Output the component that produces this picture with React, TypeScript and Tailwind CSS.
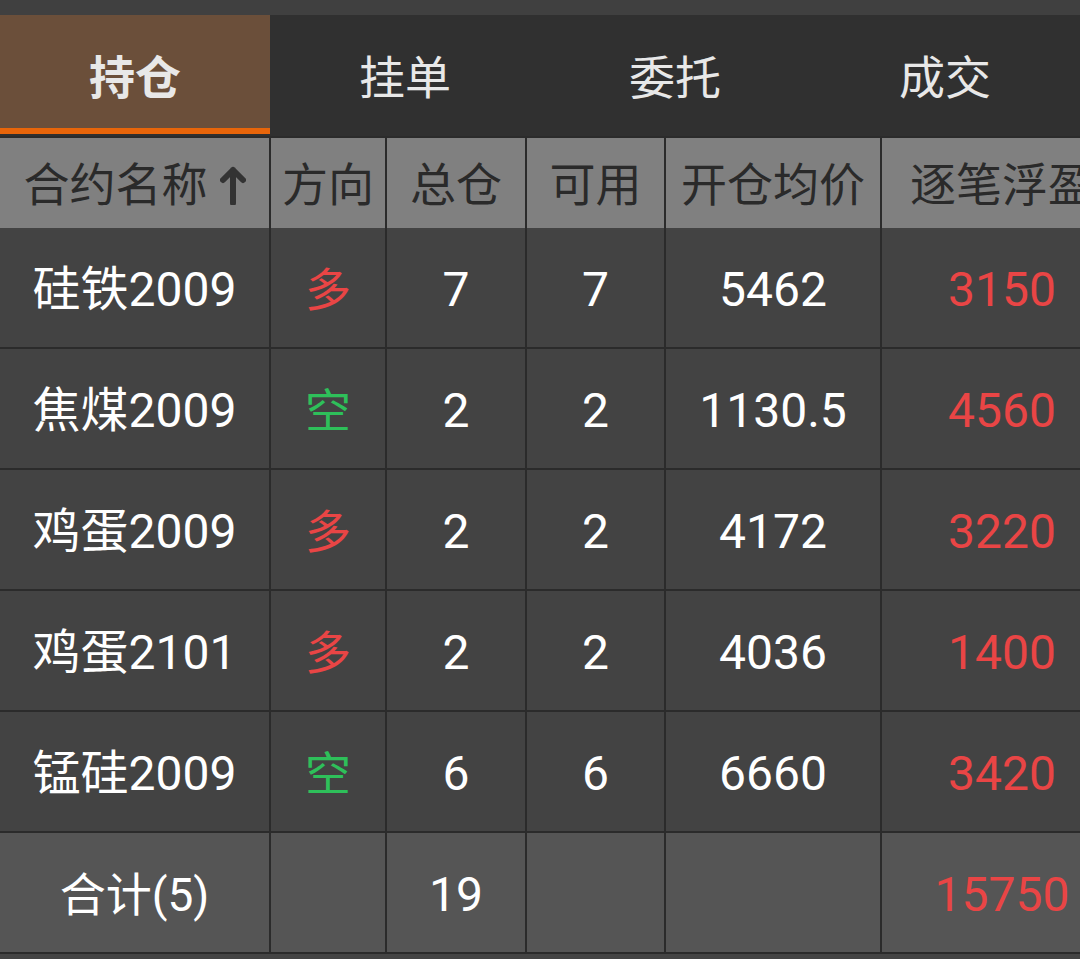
import React from "react";

const font = {
  fontFamily: 'Roboto, "Noto Sans CJK SC", "Noto Sans", sans-serif',
};

const tabs = ["持仓", "挂单", "委托", "成交"];

interface Position {
  name: string;
  side: "多" | "空";
  total: number;
  avail: number;
  price: string;
  pnl: string;
}

const rows: Position[] = [
  { name: "硅铁2009", side: "多", total: 7, avail: 7, price: "5462", pnl: "3150" },
  { name: "焦煤2009", side: "空", total: 2, avail: 2, price: "1130.5", pnl: "4560" },
  { name: "鸡蛋2009", side: "多", total: 2, avail: 2, price: "4172", pnl: "3220" },
  { name: "鸡蛋2101", side: "多", total: 2, avail: 2, price: "4036", pnl: "1400" },
  { name: "锰硅2009", side: "空", total: 6, avail: 6, price: "6660", pnl: "3420" },
];

const cols = "grid grid-cols-[271px_116px_140px_139px_216px_242px] w-[1124px]";
const cell = "flex items-center justify-center border-r-2 border-[#2b2b2b]";

function SortArrow() {
  return (
    <svg width="26" height="40" viewBox="0 0 26 40" className="ml-3 shrink-0">
      <path
        d="M13 38 V5 M3 15 L13 5 L23 15"
        fill="none"
        stroke="#333333"
        strokeWidth={6}
        strokeLinecap="round"
        strokeLinejoin="round"
      />
    </svg>
  );
}

export default function App() {
  return (
    <div className="w-[1080px] h-[959px] overflow-hidden bg-[#444444]" style={font}>
      <div className="h-[15px] bg-[#404040]" />

      <div className="flex h-[121px] bg-[#303030]">
        {tabs.map((t, i) => (
          <div
            key={t}
            className={`flex-1 flex flex-col ${i === 0 ? "bg-[#6b4f3a]" : ""}`}
          >
            <div
              className={`flex-1 flex items-center justify-center pt-[14px] text-[46px] text-[#e8e8e8] ${
                i === 0 ? "font-bold" : ""
              }`}
            >
              {t}
            </div>
            <div className={`h-[6px] ${i === 0 ? "bg-[#e8650a]" : ""}`} />
            <div className="h-[2px] bg-[#303030]" />
          </div>
        ))}
      </div>
      <div className="h-[2px] bg-[#2b2b2b]" />

      <div className={`${cols} h-[90px] bg-[#808080] text-[46px] text-[#2a2a2a]`}>
        <div className={`${cell} pt-1`}>
          <span>合约名称</span>
          <SortArrow />
        </div>
        <div className={`${cell} pt-1`}>方向</div>
        <div className={`${cell} pt-1`}>总仓</div>
        <div className={`${cell} pt-1`}>可用</div>
        <div className={`${cell} pt-1`}>开仓均价</div>
        <div className={`${cell} pt-1 border-r-0`}>逐笔浮盈</div>
      </div>

      {rows.map((r) => (
        <div
          key={r.name}
          className={`${cols} h-[121px] bg-[#434343] border-b-2 border-[#2b2b2b] text-[48px] text-white`}
        >
          <div className={`${cell} pt-[5px]`}>{r.name}</div>
          <div
            className={`${cell} pt-[5px] text-[46px] ${
              r.side === "多" ? "text-[#e94545]" : "text-[#2ec05a]"
            }`}
          >
            {r.side}
          </div>
          <div className={`${cell} pt-[5px]`}>{r.total}</div>
          <div className={`${cell} pt-[5px]`}>{r.avail}</div>
          <div className={`${cell} pt-[5px]`}>{r.price}</div>
          <div className={`${cell} pt-[5px] border-r-0 text-[#e94545]`}>{r.pnl}</div>
        </div>
      ))}

      <div
        className={`${cols} h-[121px] bg-[#555555] border-b-2 border-[#2b2b2b] text-[48px] text-white`}
      >
        <div className={`${cell} pt-[5px] text-[46px]`}>合计(5)</div>
        <div className={cell} />
        <div className={`${cell} pt-[5px]`}>19</div>
        <div className={cell} />
        <div className={cell} />
        <div className={`${cell} pt-[5px] border-r-0 text-[#e94545]`}>15750</div>
      </div>
    </div>
  );
}
